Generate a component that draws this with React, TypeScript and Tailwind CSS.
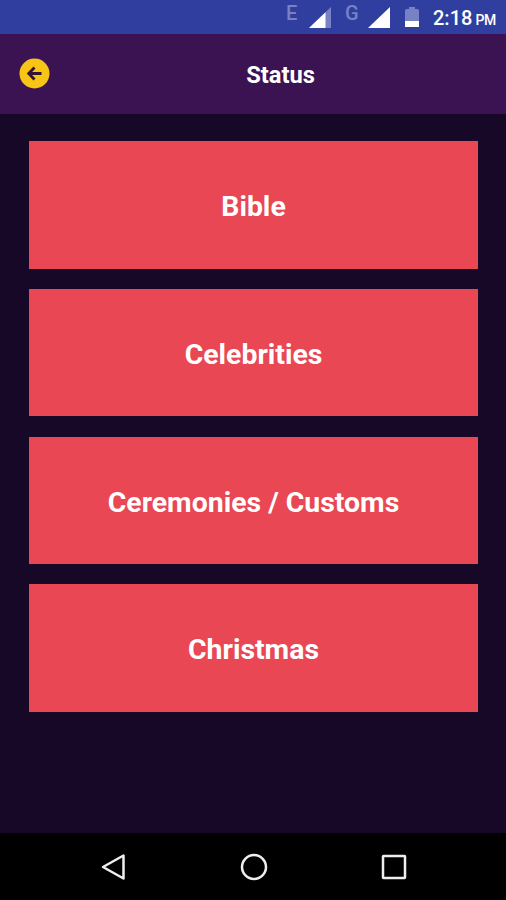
const categories = ["Bible", "Celebrities", "Ceremonies / Customs", "Christmas"];

function StatusBar() {
  return (
    <div className="flex h-[34px] shrink-0 items-start bg-[#303f9f] pl-[286px] text-white">
      <span className="mt-[3px] w-[12px] text-[20px] leading-[20px] font-medium text-[#7881c4]">E</span>
      <svg className="mt-[7px] ml-[11px] shrink-0" width="22" height="22" viewBox="0 0 22 22">
        <path d="M22 0V21H0Z" fill="#7881c4" />
        <path d="M16.5 5.2V21H0Z" fill="#fff" />
      </svg>
      <span className="mt-[3px] ml-[14px] w-[14px] text-[20px] leading-[20px] font-medium text-[#7881c4]">G</span>
      <svg className="mt-[7px] ml-[9px] shrink-0" width="22" height="22" viewBox="0 0 22 22">
        <path d="M22 0V21H0Z" fill="#fff" />
      </svg>
      <svg className="mt-[7px] ml-[15px] shrink-0" width="14" height="21" viewBox="0 0 14 21">
        <path d="M4 0H10V2H12.5Q14 2 14 3.5V14H0V3.5Q0 2 1.5 2H4Z" fill="#7881c4" />
        <path d="M0 14H14V20H0Z" fill="#fff" />
      </svg>
      <div className="mt-[6px] ml-[14px] flex items-baseline gap-[3px] leading-[24px] font-medium whitespace-nowrap">
        <span className="text-[20px]">2:18</span>
        <span className="text-[14px] tracking-[-0.3px]">PM</span>
      </div>
    </div>
  );
}

function Header() {
  return (
    <header className="grid h-[80px] shrink-0 grid-cols-[56px_1fr] items-center bg-[#3c1352] pb-[1px]">
      <button className="ml-[19px] size-[31px]" aria-label="Back">
        <svg width="31" height="31" viewBox="0 0 31 31" fill="none">
          <circle cx="15.5" cy="15.5" r="15" fill="#f6c515" />
          <path d="M15.5 9.5L9.7 15.5L15.5 21.5M10 15.5H22.5" stroke="#35142f" strokeWidth="2.8" />
        </svg>
      </button>
      <h1 className="pt-[4px] pr-[1px] text-center text-[23.7px] font-bold text-white">Status</h1>
    </header>
  );
}

function NavBar() {
  return (
    <nav className="flex h-[67px] shrink-0 items-center justify-between bg-black pr-[99px] pl-[100px]">
      <svg width="26" height="28" viewBox="0 0 26 28" fill="none" stroke="#eee" strokeWidth="2.5">
        <path d="M23.5 2.5V25.5L3 14Z" strokeLinejoin="round" />
      </svg>
      <svg width="28" height="28" viewBox="0 0 28 28" fill="none" stroke="#eee" strokeWidth="2.5">
        <circle cx="14" cy="14" r="12" />
      </svg>
      <svg width="26" height="26" viewBox="0 0 26 26" fill="none" stroke="#eee" strokeWidth="2.5">
        <rect x="2" y="2" width="22" height="22" rx="0.5" />
      </svg>
    </nav>
  );
}

export default function App() {
  return (
    <div className="flex h-[900px] w-[506px] flex-col overflow-hidden bg-[#180828] font-[Roboto,sans-serif]">
      <StatusBar />
      <Header />
      <main className="flex flex-1 flex-col gap-[20.5px] pt-[27.4px] pr-[28px] pl-[29px]">
        {categories.map((name) => (
          <button
            key={name}
            className="flex h-[127.2px] shrink-0 items-center justify-center bg-[#e94753] pt-[5.5px] text-[28.4px] font-bold text-white"
          >
            {name}
          </button>
        ))}
      </main>
      <NavBar />
    </div>
  );
}
